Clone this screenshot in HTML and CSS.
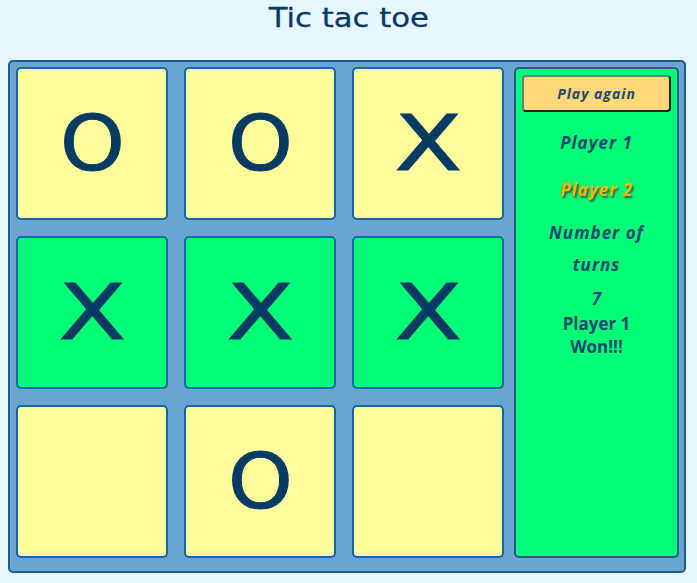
FILE: index.html
```html
<!DOCTYPE html>
<html lang="en">
<head>
<meta charset="utf-8">
<title>Tic tac toe</title>
<link rel="stylesheet" href="styles.css">
</head>
<body>
<div class="page">
  <h1 class="title"><span class="title-text">Tic tac toe</span></h1>
  <div class="board">
    <div class="cell yellow"><span class="mark o">O</span></div>
    <div class="cell yellow"><span class="mark o">O</span></div>
    <div class="cell yellow"><span class="mark x">X</span></div>
    <aside class="panel">
      <button class="again">Play again</button>
      <p class="player">Player 1</p>
      <p class="player active">Player 2</p>
      <p class="turns">Number of<br>turns</p>
      <p class="count">7</p>
      <p class="result">Player 1<br>Won!!!</p>
    </aside>
    <div class="cell green"><span class="mark x">X</span></div>
    <div class="cell green"><span class="mark x">X</span></div>
    <div class="cell green"><span class="mark x">X</span></div>
    <div class="cell yellow"></div>
    <div class="cell yellow"><span class="mark o">O</span></div>
    <div class="cell yellow"></div>
  </div>
</div>
</body>
</html>
```
FILE: styles.css
```css
html, body {
  margin: 0;
  padding: 0;
  background: #e6f7ff;
}
.page {
  padding: 0 8px;
}
.title {
  margin: 3px 0 27px;
  font-family: "DejaVu Sans", sans-serif;
  font-weight: 400;
  font-size: 26px;
  line-height: 30px;
  text-align: center;
  color: #073b66;
}
.title-text {
  display: inline-block;
  transform: scaleX(1.18);
  -webkit-text-stroke: 0.3px #073b66;
}
.board {
  box-sizing: border-box;
  width: 678px;
  height: 513px;
  border: 2px solid #245a85;
  border-radius: 5px;
  background: #66a6d0;
  padding: 5px 5px 13px 6px;
  display: grid;
  grid-template-columns: 152px 152px 152px 1fr;
  grid-template-rows: 153px 153px 153px;
  column-gap: 16px;
  row-gap: 16px;
}
.cell {
  box-sizing: border-box;
  border: 2px solid #1466a6;
  border-radius: 5px;
  display: flex;
  align-items: center;
  justify-content: center;
  font-family: "DejaVu Sans", sans-serif;
  font-size: 77px;
  color: #063b64;
  line-height: 1;
}
.mark {
  display: inline-block;
  -webkit-text-stroke: 1px #063b64;
}
.mark.o { transform: scaleX(1.07); }
.mark.x { transform: scaleX(1.28); }
.yellow { background: #fffc9e; }
.green { background: #00ff77; }
.panel {
  grid-column: 4;
  grid-row: 1 / span 3;
  margin-left: -6px;
  box-sizing: border-box;
  border: 2px solid #245a85;
  border-radius: 5px;
  background: #00ff77;
  padding: 6px;
  display: flex;
  flex-direction: column;
  align-items: stretch;
  text-align: center;
  font-family: "Open Sans", sans-serif;
  color: #17476d;
}
.again {
  height: 37px;
  margin: 0;
  padding: 0;
  background: #ffd877;
  border: 2px solid;
  border-color: #7a7a7a #222 #222 #7a7a7a;
  border-radius: 4px;
  font-family: "Open Sans", sans-serif;
  font-style: italic;
  font-weight: 700;
  font-size: 14px;
  letter-spacing: 1px;
  color: #1b4a72;
}
.panel p {
  margin: 0;
  font-weight: 700;
}
.player {
  margin-top: 19px !important;
  font-style: italic;
  font-size: 17px;
  letter-spacing: 1px;
  line-height: 24px;
}
.player.active {
  margin-top: 23px !important;
  color: #ffb300;
  text-shadow: 2px 2px 2px #3d5a3d;
}
.turns {
  margin-top: 15px !important;
  font-style: italic;
  font-size: 17px;
  letter-spacing: 1px;
  line-height: 32px;
}
.count {
  margin-top: 6px !important;
  font-style: italic;
  font-size: 17px;
  line-height: 24px;
}
.result {
  margin-top: 1px !important;
  font-size: 17px;
  line-height: 23px;
}
```
